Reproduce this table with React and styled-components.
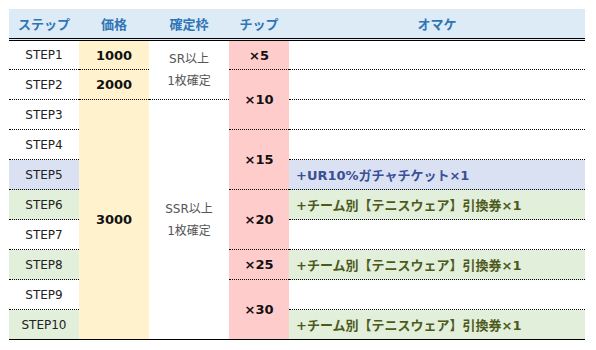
import React from "react";
import styled, {createGlobalStyle} from "styled-components";

const GlobalStyle = createGlobalStyle`
  body {
    margin: 0;
    background: #fff;
    font-family: "DejaVu Sans", "Noto Sans CJK JP", sans-serif;
  }
`;

const tones = {
  none: {bg: "transparent", fg: "#222"},
  blue: {bg: "#d9e1f2", fg: "#3b4f96"},
  green: {bg: "#e2efda", fg: "#4d5a1c"},
};

const rows = [
  {step: "STEP1", tone: "none", price: {label: "1000", span: 1}, frame: {lines: ["SR以上", "1枚確定"], span: 2}, chip: {label: "×5", span: 1}},
  {step: "STEP2", tone: "none", price: {label: "2000", span: 1}, chip: {label: "×10", span: 2}},
  {step: "STEP3", tone: "none", price: {label: "3000", span: 8}, frame: {lines: ["SSR以上", "1枚確定"], span: 8}},
  {step: "STEP4", tone: "none", chip: {label: "×15", span: 2}},
  {step: "STEP5", tone: "blue", bonus: "+UR10%ガチャチケット×1"},
  {step: "STEP6", tone: "green", chip: {label: "×20", span: 2}, bonus: "+チーム別【テニスウェア】引換券×1"},
  {step: "STEP7", tone: "none"},
  {step: "STEP8", tone: "green", chip: {label: "×25", span: 1}, bonus: "+チーム別【テニスウェア】引換券×1"},
  {step: "STEP9", tone: "none", chip: {label: "×30", span: 2}},
  {step: "STEP10", tone: "green", bonus: "+チーム別【テニスウェア】引換券×1"},
];

const App = () => {
  return (
    <Wrapper>
      <GlobalStyle />
      <Table>
        <colgroup>
          <col style={{width: 70}} />
          <col style={{width: 70}} />
          <col style={{width: 80}} />
          <col style={{width: 60}} />
          <col />
        </colgroup>
        <thead>
          <tr>
            <Head>ステップ</Head>
            <Head>価格</Head>
            <Head>確定枠</Head>
            <Head>チップ</Head>
            <Head>オマケ</Head>
          </tr>
        </thead>
        <tbody>
          {rows.map((row) => (
            <Row key={row.step}>
              <StepCell $tone={row.tone}>{row.step}</StepCell>
              {row.price && (
                <PriceCell rowSpan={row.price.span}>{row.price.label}</PriceCell>
              )}
              {row.frame && (
                <FrameCell rowSpan={row.frame.span}>
                  {row.frame.lines.map((line) => (
                    <div key={line}>{line}</div>
                  ))}
                </FrameCell>
              )}
              {row.chip && (
                <ChipCell rowSpan={row.chip.span}>{row.chip.label}</ChipCell>
              )}
              <BonusCell $tone={row.tone}>{row.bonus}</BonusCell>
            </Row>
          ))}
        </tbody>
      </Table>
    </Wrapper>
  );
};

const Wrapper = styled.div`
  padding: 9px 11px 0 9px;
`;

const Table = styled.table`
  width: 576px;
  border-collapse: collapse;
  table-layout: fixed;
  border-bottom: 1px solid #000;
`;

const Head = styled.th`
  height: 28px;
  padding: 0 0 1px;
  background: #ddebf7;
  color: #2f75b5;
  font-size: 13px;
  font-weight: 700;
  text-align: center;
  border-bottom: 3px double #000;
`;

const Row = styled.tr`
  height: 30px;
`;

const Cell = styled.td`
  padding: 0;
  text-align: center;
  vertical-align: middle;
  border-bottom: 1px dotted #000;
`;

const StepCell = styled(Cell)`
  background: ${({$tone}) => tones[$tone].bg};
  color: #222;
  font-size: 12px;
`;

const PriceCell = styled(Cell)`
  background: #fff2cc;
  color: #111;
  font-size: 13px;
  font-weight: 700;
`;

const FrameCell = styled(Cell)`
  color: #555;
  font-size: 12px;
  line-height: 22px;
`;

const ChipCell = styled(Cell)`
  background: #ffcccc;
  color: #111;
  font-size: 13px;
  font-weight: 700;
`;

const BonusCell = styled(Cell)`
  background: ${({$tone}) => tones[$tone].bg};
  color: ${({$tone}) => tones[$tone].fg};
  text-align: left;
  padding-left: 7px;
  font-size: 13px;
  font-weight: 700;
`;

export default App;
